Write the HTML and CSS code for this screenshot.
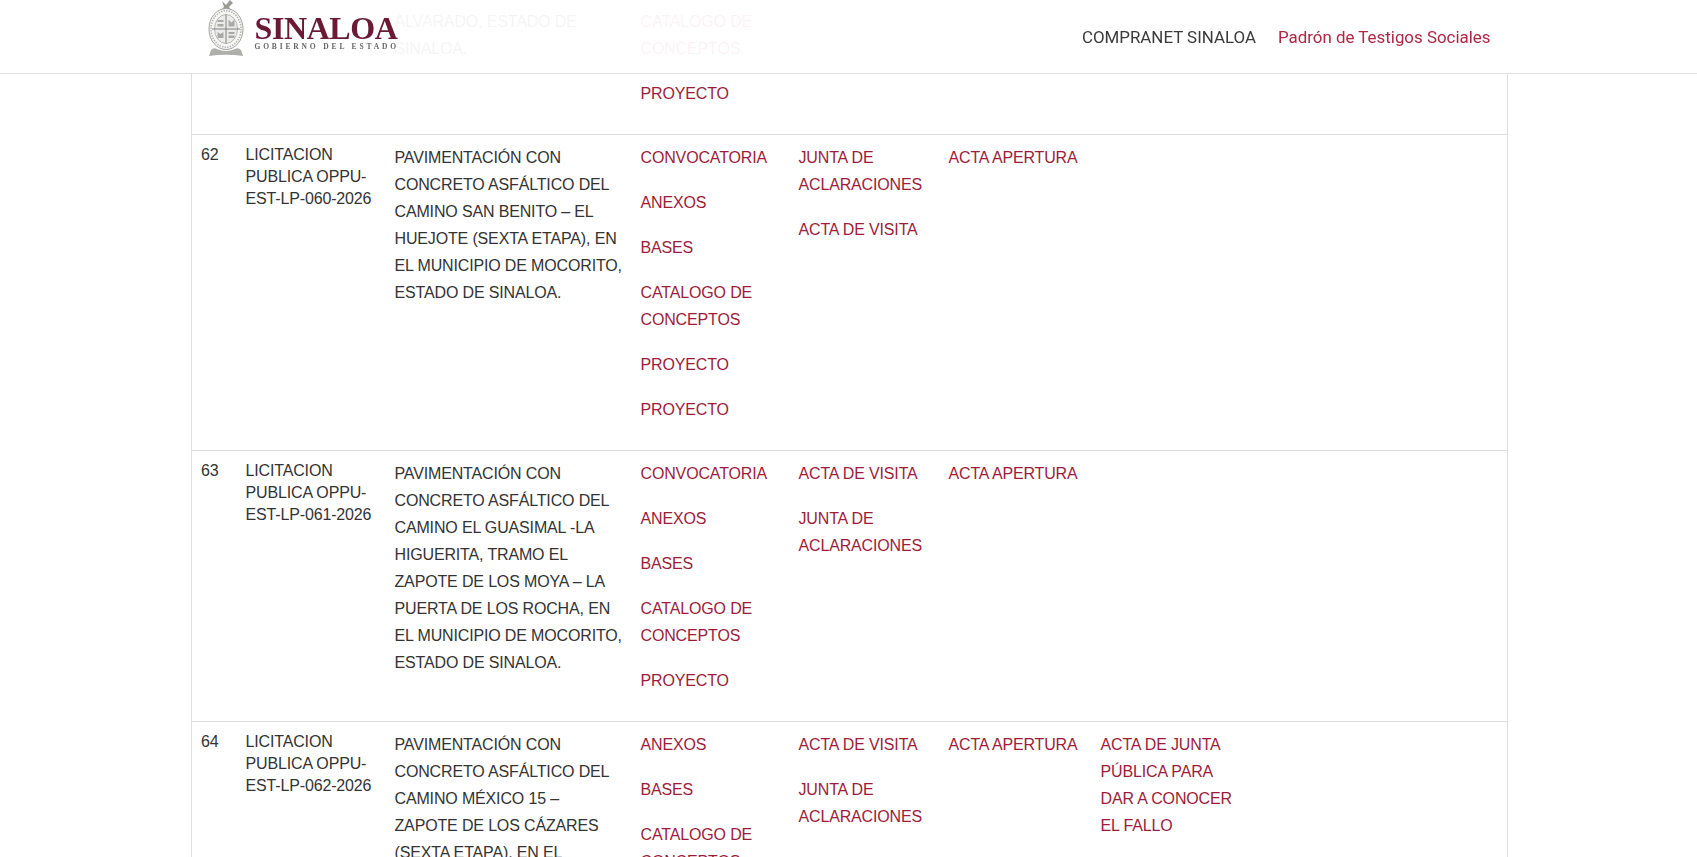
FILE: index.html
```html
<!DOCTYPE html>
<html lang="es">
<head>
  <meta charset="UTF-8">
  <title>Padrón de Testigos Sociales</title>
  <link rel="stylesheet" href="styles.css">
</head>
<body>

  <header class="topbar">
    <div class="topbar-inner">
      <a class="brand" href="#">
        <svg class="seal" viewBox="0 0 36 57" width="36" height="57" aria-hidden="true">
          <path d="M14 1 L18 5 L22 0 L25 3 L21 7 L23 10 L13 10 L16 7 Z" fill="#9a9a97"/>
          <ellipse cx="18" cy="29" rx="17" ry="20.5" fill="#f6f6f4" stroke="#a2a29f" stroke-width="1"/>
          <ellipse cx="18" cy="29" rx="15" ry="18.2" fill="none" stroke="#b5b5b2" stroke-width="1.6" stroke-dasharray="1.4 1.2"/>
          <ellipse cx="18" cy="29" rx="11.5" ry="14.5" fill="#ececea" stroke="#a8a8a5" stroke-width="0.8"/>
          <path d="M18 14.5 V43.5 M4 29 H32" stroke="#77777a" stroke-width="0.9"/>
          <path d="M9.5 20 h6 v2 h-6 z M9.5 24 h6 v2.5 h-6 z M20.5 19.5 l3 3 l3 -3 v7 h-6 z M9.5 32 l3 2 l3 -2 v6 h-6 z M20.5 32 h6 v2 h-6 z M20.5 35.5 h6 v2.5 h-6 z" fill="#a9a9a6"/>
          <path d="M1 56 L3 50 Q6 47 9 49 Q18 53 27 49 Q30 47 33 50 L35 56 Q18 53.5 1 56 Z" fill="#aeaeab"/>
        </svg>
        <span class="brand-text">
          <span class="brand-name">SINALOA</span>
          <span class="brand-sub">GOBIERNO DEL ESTADO</span>
        </span>
      </a>
      <nav class="topnav">
        <a class="topnav-link" href="#">COMPRANET SINALOA</a>
        <a class="topnav-link topnav-active" href="#">Padrón de Testigos Sociales</a>
      </nav>
    </div>
  </header>

  <main class="content">
    <table class="lic-table">
      <colgroup>
        <col class="c-num"><col class="c-tipo"><col class="c-desc"><col class="c-docs"><col class="c-junta"><col class="c-acta"><col class="c-fallo"><col>
      </colgroup>
      <tbody>
        <tr class="row-partial">
          <td></td>
          <td></td>
          <td class="desc"><p>ALVARADO, ESTADO DE SINALOA.</p></td>
          <td>
            <p><a href="#">CATALOGO DE CONCEPTOS</a></p>
            <p><a href="#">PROYECTO</a></p>
          </td>
          <td></td><td></td><td></td><td></td>
        </tr>
        <tr>
          <td>62</td>
          <td>LICITACION PUBLICA OPPU-EST-LP-060-2026</td>
          <td class="desc"><p>PAVIMENTACIÓN CON CONCRETO ASFÁLTICO DEL CAMINO SAN BENITO – EL HUEJOTE (SEXTA ETAPA), EN EL MUNICIPIO DE MOCORITO, ESTADO DE SINALOA.</p></td>
          <td>
            <p><a href="#">CONVOCATORIA</a></p>
            <p><a href="#">ANEXOS</a></p>
            <p><a href="#">BASES</a></p>
            <p><a href="#">CATALOGO DE CONCEPTOS</a></p>
            <p><a href="#">PROYECTO</a></p>
            <p><a href="#">PROYECTO</a></p>
          </td>
          <td>
            <p><a href="#">JUNTA DE ACLARACIONES</a></p>
            <p><a href="#">ACTA DE VISITA</a></p>
          </td>
          <td><p><a href="#">ACTA APERTURA</a></p></td>
          <td></td><td></td>
        </tr>
        <tr>
          <td>63</td>
          <td>LICITACION PUBLICA OPPU-EST-LP-061-2026</td>
          <td class="desc"><p>PAVIMENTACIÓN CON CONCRETO ASFÁLTICO DEL CAMINO EL GUASIMAL -LA HIGUERITA, TRAMO EL ZAPOTE DE LOS MOYA – LA PUERTA DE LOS ROCHA, EN EL MUNICIPIO DE MOCORITO, ESTADO DE SINALOA.</p></td>
          <td>
            <p><a href="#">CONVOCATORIA</a></p>
            <p><a href="#">ANEXOS</a></p>
            <p><a href="#">BASES</a></p>
            <p><a href="#">CATALOGO DE CONCEPTOS</a></p>
            <p><a href="#">PROYECTO</a></p>
          </td>
          <td>
            <p><a href="#">ACTA DE VISITA</a></p>
            <p><a href="#">JUNTA DE ACLARACIONES</a></p>
          </td>
          <td><p><a href="#">ACTA APERTURA</a></p></td>
          <td></td><td></td>
        </tr>
        <tr>
          <td>64</td>
          <td>LICITACION PUBLICA OPPU-EST-LP-062-2026</td>
          <td class="desc"><p>PAVIMENTACIÓN CON CONCRETO ASFÁLTICO DEL CAMINO MÉXICO 15 – ZAPOTE DE LOS CÁZARES (SEXTA ETAPA), EN EL MUNICIPIO DE MOCORITO, ESTADO DE SINALOA.</p></td>
          <td>
            <p><a href="#">ANEXOS</a></p>
            <p><a href="#">BASES</a></p>
            <p><a href="#">CATALOGO DE CONCEPTOS</a></p>
            <p><a href="#">PROYECTO</a></p>
          </td>
          <td>
            <p><a href="#">ACTA DE VISITA</a></p>
            <p><a href="#">JUNTA DE ACLARACIONES</a></p>
          </td>
          <td><p><a href="#">ACTA APERTURA</a></p></td>
          <td><p><a href="#">ACTA DE JUNTA PÚBLICA PARA DAR A CONOCER EL FALLO</a></p></td>
          <td></td>
        </tr>
      </tbody>
    </table>
  </main>

</body>
</html>
```

FILE: styles.css
```css
* { box-sizing: border-box; }

html, body {
  margin: 0;
  height: 857px;
  overflow: hidden;
}

body {
  background: #fff;
  color: #333;
  font-family: "Liberation Sans", Arial, sans-serif;
  font-size: 16px;
  line-height: 22px;
}

a {
  color: #9d1c3a;
  text-decoration: none;
}

/* barra fija, deja ver un poco el texto de abajo */
.topbar {
  position: fixed;
  top: 0;
  left: 0;
  right: 0;
  height: 74px;
  background: rgba(255,255,255,0.95);
  border-bottom: 1px solid #e2e2e2;
  z-index: 10;
}

.topbar-inner {
  width: 1316px;
  height: 73px;
  margin: 0 auto;
  display: flex;
  align-items: center;
  justify-content: space-between;
  padding: 0 16px 0 17px;
}

.brand {
  display: flex;
  align-items: flex-start;
  gap: 11px;
  height: 73px;
}

.seal {
  display: block;
}

.brand-text {
  display: flex;
  flex-direction: column;
  margin-top: 14px;
}

.brand-name {
  font-family: "Liberation Serif", serif;
  font-weight: bold;
  font-size: 32px;
  line-height: 28px;
  color: #6b1a35;
  letter-spacing: -0.4px;
}

.brand-sub {
  font-family: "Liberation Serif", serif;
  font-weight: bold;
  font-size: 7.5px;
  line-height: 10px;
  letter-spacing: 2.85px;
  color: #666;
  white-space: nowrap;
}

.topnav {
  display: flex;
  gap: 22px;
}

.topnav-link {
  font-family: Roboto, sans-serif;
  font-size: 16.9px;
  color: #3a3a3a;
}

.topnav-active {
  color: #ad2845;
}

.content {
  width: 1317px;
  margin: -71px 0 0 191px;
}

.lic-table {
  width: 100%;
  table-layout: fixed;
  border-collapse: collapse;
  border-left: 1px solid #dedede;
  border-right: 1px solid #dedede;
  letter-spacing: -0.15px;
}

.lic-table td {
  padding: 9px;
  vertical-align: top;
  border-bottom: 1px solid #dedede;
}

.lic-table td.desc {
  padding-right: 8px;
}

.lic-table p {
  margin: 0 0 18px;
  line-height: 27px;
}

.c-num { width: 45px; }
.c-tipo { width: 149px; }
.c-desc { width: 246px; }
.c-docs { width: 158px; }
.c-junta { width: 150px; }
.c-acta { width: 152px; }
.c-fallo { width: 150px; }

.row-partial td { padding-top: 79px; }
```
